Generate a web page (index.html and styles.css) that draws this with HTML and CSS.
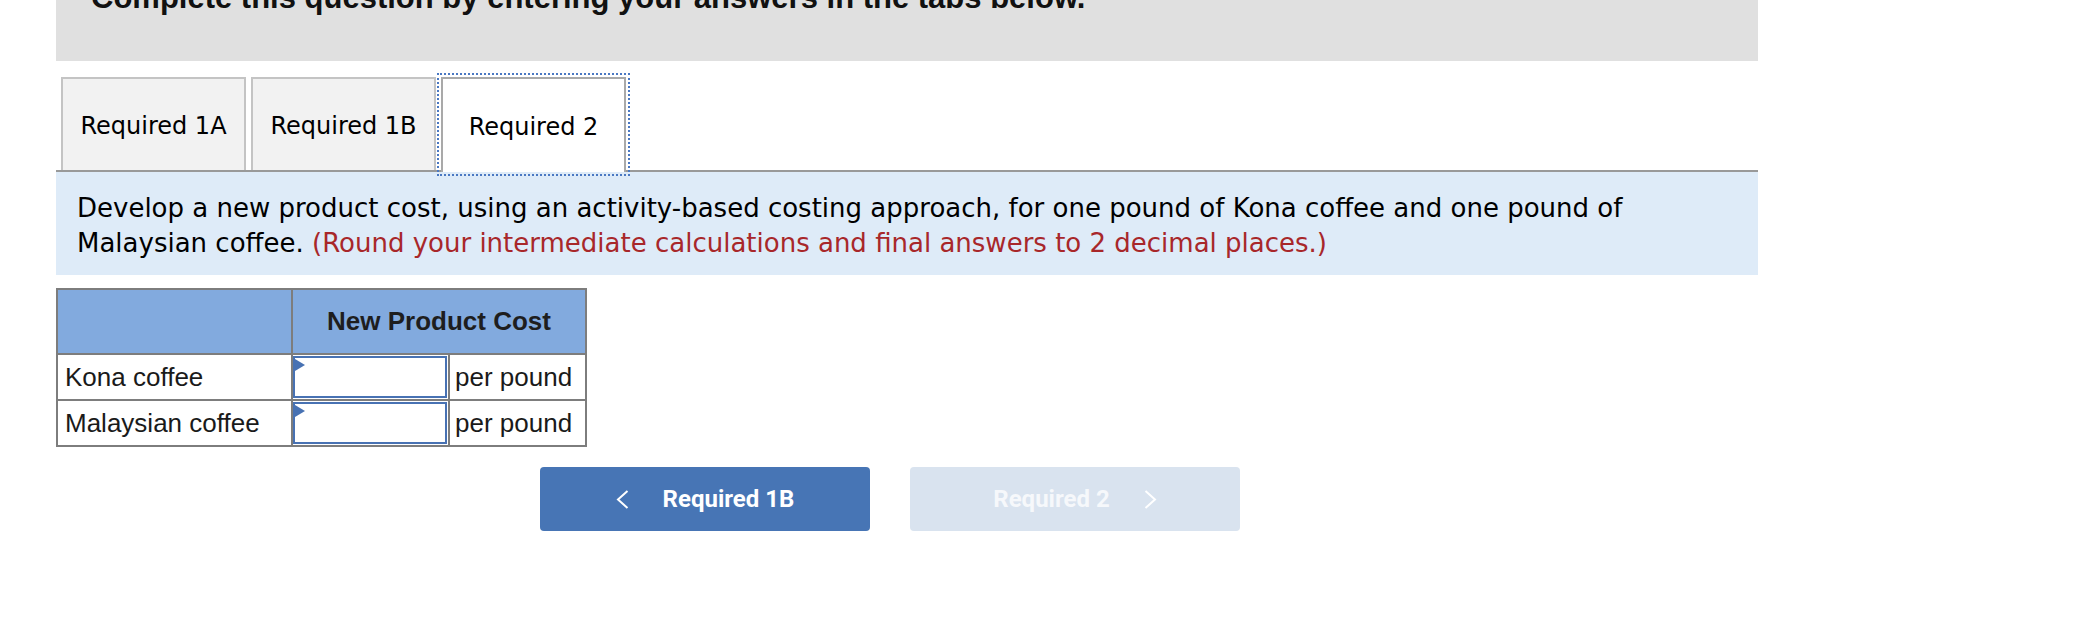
FILE: index.html
```html
<!DOCTYPE html>
<html lang="en">
<head>
<meta charset="utf-8">
<title>Required 2</title>
<link rel="stylesheet" href="styles.css">
</head>
<body>
<div class="page">
  <div class="intro">
    <h2 class="intro-title">Complete this question by entering your answers in the tabs below.</h2>
  </div>

  <div class="tabs">
    <div class="tab">Required 1A</div>
    <div class="tab">Required 1B</div>
    <div class="tab tab-active">Required 2</div>
  </div>

  <div class="instructions">
    Develop a new product cost, using an activity-based costing approach, for one pound of Kona coffee and one pound of Malaysian coffee. <span class="note">(Round your intermediate calculations and final answers to 2 decimal places.)</span>
  </div>

  <table class="cost-table">
    <colgroup>
      <col class="c1"><col class="c2"><col class="c3">
    </colgroup>
    <thead>
      <tr>
        <th></th>
        <th colspan="2">New Product Cost</th>
      </tr>
    </thead>
    <tbody>
      <tr>
        <td class="label">Kona coffee</td>
        <td class="entry"><div class="field"><input type="text" aria-label="Kona coffee"><span class="flag"></span></div></td>
        <td class="unit">per pound</td>
      </tr>
      <tr>
        <td class="label">Malaysian coffee</td>
        <td class="entry"><div class="field"><input type="text" aria-label="Malaysian coffee"><span class="flag"></span></div></td>
        <td class="unit">per pound</td>
      </tr>
    </tbody>
  </table>

  <div class="nav">
    <button class="nav-btn nav-prev" type="button">
      <svg class="chev" width="13" height="19" viewBox="0 0 13 19"><polyline points="11.5,1 2,9.5 11.5,18" fill="none" stroke="#ffffff" stroke-width="2"/></svg>
      <span>Required 1B</span>
    </button>
    <button class="nav-btn nav-next" type="button">
      <span>Required 2</span>
      <svg class="chev" width="13" height="19" viewBox="0 0 13 19"><polyline points="1.5,1 11,9.5 1.5,18" fill="none" stroke="#ffffff" stroke-width="2"/></svg>
    </button>
  </div>
</div>
</body>
</html>
```

FILE: styles.css
```css
html, body {
  margin: 0;
  padding: 0;
  background: #ffffff;
}

.page {
  width: 1702px;
  margin-left: 56px;
  font-family: Verdana, "DejaVu Sans", sans-serif;
  color: #000;
}

.intro {
  background: #e0e0e0;
  height: 61px;
  overflow: hidden;
  padding-left: 35px;
}

.intro-title {
  margin: -20px 0 0;
  font-family: "Liberation Sans", Arial, sans-serif;
  font-weight: 700;
  font-size: 31px;
  line-height: 36px;
  color: #111;
  white-space: nowrap;
}

.tabs {
  display: flex;
  gap: 5px;
  margin-top: 16px;
  padding-left: 5px;
  border-bottom: 2px solid #999999;
  height: 93px;
}

.tab {
  box-sizing: border-box;
  width: 185px;
  height: 93px;
  border: 2px solid #c4c4c4;
  border-bottom: 0;
  background: #f2f2f2;
  display: flex;
  align-items: center;
  justify-content: center;
  padding-top: 2px;
  font-size: 24px;
  color: #000;
}

.tab-active {
  background: #ffffff;
  border-color: #a9a9a9;
  height: 95px;
  outline: 2px dotted #4a78c2;
  outline-offset: 2px;
  position: relative;
}

.instructions {
  background: #deebf8;
  padding: 19px 20px 14px 21px;
  font-size: 26px;
  line-height: 35px;
  color: #000;
}

.note {
  color: #a8272a;
}

.cost-table {
  margin-top: 13px;
  border-collapse: collapse;
  width: 529px;
  table-layout: fixed;
  font-family: "Liberation Sans", Arial, sans-serif;
  font-size: 26px;
  color: #1a1a1a;
}

.c1 { width: 235px; }
.c2 { width: 157px; }
.c3 { width: 137px; }

.cost-table th,
.cost-table td {
  border: 2px solid #7d7d7d;
}

.cost-table th {
  background: #82aade;
  height: 63px;
  font-weight: 700;
  text-align: center;
  padding: 0;
  color: #1e1e1e;
}

.cost-table td {
  height: 42px;
  padding: 0;
}

.label {
  padding-left: 7px !important;
  white-space: nowrap;
}

.unit {
  padding-left: 5px !important;
  white-space: nowrap;
}

.entry {
  padding: 1px 1px 1px 0 !important;
}

.field {
  position: relative;
  height: 42px;
}

.field input {
  box-sizing: border-box;
  display: block;
  width: 100%;
  height: 42px;
  margin: 0;
  border: 2px solid #4872b3;
  background: #ffffff;
  outline: none;
  font-size: 24px;
}

.flag {
  position: absolute;
  left: 2px;
  top: 3px;
  width: 0;
  height: 0;
  border-top: 6px solid transparent;
  border-bottom: 6px solid transparent;
  border-left: 10px solid #4872b3;
}

.nav {
  display: flex;
  gap: 40px;
  margin-top: 20px;
  padding-left: 484px;
}

.nav-btn {
  box-sizing: border-box;
  width: 330px;
  height: 64px;
  border: 0;
  border-radius: 4px;
  display: flex;
  align-items: center;
  justify-content: center;
  gap: 34px;
  font-family: Roboto, "Liberation Sans", sans-serif;
  font-weight: 700;
  font-size: 24px;
  color: #ffffff;
  padding: 0;
}

.nav-prev {
  background: #4775b5;
}

.nav-next {
  background: #d9e3ef;
  color: #f6f8fb;
}

.chev {
  display: block;
}
```
